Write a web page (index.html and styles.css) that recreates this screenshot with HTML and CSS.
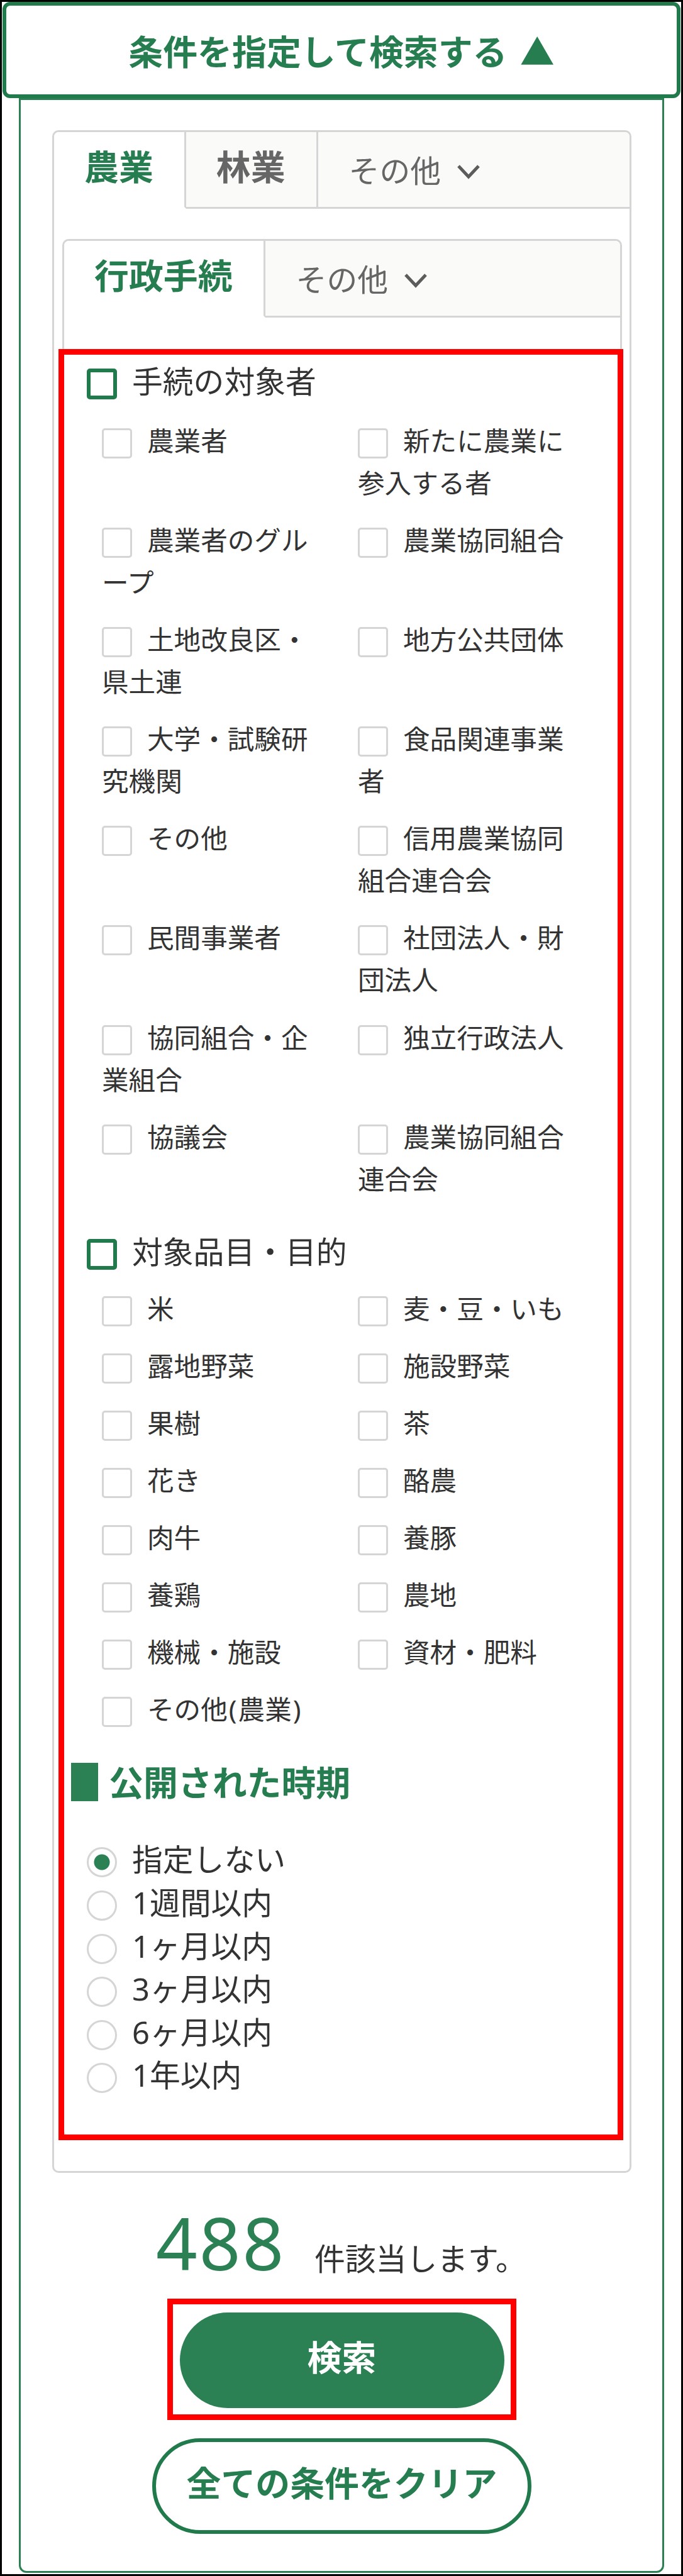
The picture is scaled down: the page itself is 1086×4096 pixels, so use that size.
FILE: index.html
```
<!DOCTYPE html>
<html lang="ja">
<head>
    <meta charset="UTF-8">
    <meta name="viewport" content="width=device-width, initial-scale=1.0">
    <title>条件を指定して検索する</title>
    <link rel="stylesheet" href="styles.css">
</head>
<body>
    <div class="page">
        <div class="search-toggle">条件を指定して検索する <span class="arrow">▲</span></div>

        <div class="search-panel">
            <div class="tab-box">
                <div class="tabs">
                    <div class="tab active">農業</div>
                    <div class="tab">林業</div>
                    <div class="tab-more">その他
                        <svg class="chevron" viewBox="0 0 38 24"><path d="M3 3 L19 20 L35 3"/></svg>
                    </div>
                </div>

                <div class="inner-box">
                    <div class="tabs">
                        <div class="tab active">行政手続</div>
                        <div class="tab-more">その他
                            <svg class="chevron" viewBox="0 0 38 24"><path d="M3 3 L19 20 L35 3"/></svg>
                        </div>
                    </div>

                    <div class="conditions">
                        <div class="group-title"><span class="check"></span>手続の対象者</div>
                        <div class="items">
                            <label class="item"><span class="check"></span>農業者</label>
                            <label class="item"><span class="check"></span>新たに農業に参入する者</label>
                            <label class="item"><span class="check"></span>農業者のグループ</label>
                            <label class="item"><span class="check"></span>農業協同組合</label>
                            <label class="item"><span class="check"></span>土地改良区・県土連</label>
                            <label class="item"><span class="check"></span>地方公共団体</label>
                            <label class="item"><span class="check"></span>大学・試験研究機関</label>
                            <label class="item"><span class="check"></span>食品関連事業者</label>
                            <label class="item"><span class="check"></span>その他</label>
                            <label class="item"><span class="check"></span>信用農業協同組合連合会</label>
                            <label class="item"><span class="check"></span>民間事業者</label>
                            <label class="item"><span class="check"></span>社団法人・財団法人</label>
                            <label class="item"><span class="check"></span>協同組合・企業組合</label>
                            <label class="item"><span class="check"></span>独立行政法人</label>
                            <label class="item"><span class="check"></span>協議会</label>
                            <label class="item"><span class="check"></span>農業協同組合連合会</label>
                        </div>

                        <div class="group-title second"><span class="check"></span>対象品目・目的</div>
                        <div class="items">
                            <label class="item"><span class="check"></span>米</label>
                            <label class="item"><span class="check"></span>麦・豆・いも</label>
                            <label class="item"><span class="check"></span>露地野菜</label>
                            <label class="item"><span class="check"></span>施設野菜</label>
                            <label class="item"><span class="check"></span>果樹</label>
                            <label class="item"><span class="check"></span>茶</label>
                            <label class="item"><span class="check"></span>花き</label>
                            <label class="item"><span class="check"></span>酪農</label>
                            <label class="item"><span class="check"></span>肉牛</label>
                            <label class="item"><span class="check"></span>養豚</label>
                            <label class="item"><span class="check"></span>養鶏</label>
                            <label class="item"><span class="check"></span>農地</label>
                            <label class="item"><span class="check"></span>機械・施設</label>
                            <label class="item"><span class="check"></span>資材・肥料</label>
                            <label class="item"><span class="check"></span>その他<span class="paren">(</span>農業<span class="paren">)</span></label>
                        </div>

                        <h2 class="period-title">公開された時期</h2>
                        <div class="radios">
                            <label class="radio-row"><span class="radio checked"></span>指定しない</label>
                            <label class="radio-row"><span class="radio"></span>1週間以内</label>
                            <label class="radio-row"><span class="radio"></span>1ヶ月以内</label>
                            <label class="radio-row"><span class="radio"></span>3ヶ月以内</label>
                            <label class="radio-row"><span class="radio"></span>6ヶ月以内</label>
                            <label class="radio-row"><span class="radio"></span>1年以内</label>
                        </div>
                    </div>
                    <div class="frame frame-conditions"></div>
                </div>
            </div>

            <div class="result">
                <span class="count">488</span>
                <span class="count-label">件該当します。</span>
            </div>

            <div class="buttons">
                <div class="btn btn-search">検索<div class="frame frame-search"></div></div>
                <div class="btn btn-clear">全ての条件をクリア</div>
            </div>
        </div>
    </div>
</body>
</html>
```
FILE: styles.css
```
* {
    box-sizing: border-box;
}

body {
    margin: 0;
    background-color: #fff;
    color: #333;
    font-family: "Noto Sans", "Noto Sans CJK JP", sans-serif;
    font-size: 48.8px;
}

.page {
    height: 4096px;
    border: 3px solid #000;
    padding-left: 1px;
    padding-right: 1px;
    overflow: hidden;
}

.search-toggle {
    height: 153px;
    border: 6px solid #217a4b;
    border-radius: 12px;
    color: #267d50;
    font-size: 54.9px;
    font-weight: bold;
    line-height: 145px;
    text-align: center;
}

.arrow {
    margin-left: 6px;
}

.search-panel {
    height: 3935px;
    margin: 0 26px;
    border: 3px solid #2b8054;
    border-radius: 0 0 12px 12px;
    padding: 48px 49px 0 50px;
}

/* タブ */
.tab-box {
    height: 3248px;
    border: 3px solid #d5d5d5;
    border-radius: 10px;
}

.tabs {
    display: flex;
    height: 122px;
}

.tab {
    padding: 0 49px 0 48px;
    border-right: 3px solid #d5d5d5;
    border-bottom: 3px solid #d5d5d5;
    background-color: #fafaf9;
    color: #666;
    font-size: 54.9px;
    font-weight: bold;
    line-height: 110px;
    white-space: nowrap;
}

.tab.active {
    border-bottom-color: #fff;
    border-radius: 8px 0 0 0;
    background-color: #fff;
    color: #267d50;
}

.tab-more {
    flex: 1;
    display: flex;
    align-items: center;
    padding: 0 0 2px 49px;
    border-bottom: 3px solid #d5d5d5;
    border-radius: 0 8px 0 0;
    background-color: #fafaf9;
    color: #666;
}

.chevron {
    width: 38px;
    height: 24px;
    margin-top: 8px;
    margin-left: 25px;
    fill: none;
    stroke: #5c5c5c;
    stroke-width: 5;
}

.inner-box {
    position: relative;
    height: 3018px;
    margin: 48px 12px 0 13px;
    border: 3px solid #d5d5d5;
    border-radius: 10px;
}

/* 検索条件 */
.conditions {
    padding-top: 68px;
}

.group-title {
    margin-bottom: 27px;
    padding-left: 36px;
    line-height: 67px;
}

.group-title.second {
    margin-top: 49px;
    margin-bottom: 23px;
}

.check {
    display: inline-block;
    width: 48px;
    height: 48px;
    margin-right: 24px;
    border: 3px solid #d5d5d5;
    border-radius: 5px;
    vertical-align: -12px;
}

.group-title .check {
    height: 49px;
    border: 6px solid #217a4b;
    vertical-align: -10px;
}

.items {
    display: grid;
    grid-template-columns: 407px 370px;
    row-gap: 24.1px;
    padding-left: 60px;
}

.item {
    padding-right: 45px;
    font-size: 42.6px;
    line-height: 67px;
    line-break: anywhere;
}

.item:nth-child(even) {
    padding-right: 20px;
}

.paren {
    margin: 0 2px;
}

.period-title {
    display: flex;
    align-items: center;
    margin: 52px 0 0 11px;
    color: #267d50;
    font-size: 54.9px;
    font-weight: bold;
    line-height: 61px;
}

.period-title::before {
    content: "";
    width: 43px;
    height: 61px;
    margin-right: 17px;
    background-color: #2b8054;
}

.radios {
    margin-top: 58px;
    padding-left: 36px;
}

.radio-row {
    display: block;
    line-height: 68.6px;
}

.radio {
    display: inline-block;
    width: 48px;
    height: 48px;
    margin-right: 24px;
    border: 3px solid #d5d5d5;
    border-radius: 50%;
    vertical-align: -10px;
}

.radio.checked {
    background: radial-gradient(circle, #2b8054 12px, #fff 13px);
}

/* 赤枠 */
.frame {
    position: absolute;
    border: 9px solid #f00;
}

.frame-conditions {
    top: 172px;
    left: -9px;
    width: 898px;
    height: 2848px;
}

.frame-search {
    top: -22px;
    left: -20px;
    width: 555px;
    height: 193px;
}

/* 件数とボタン */
.result {
    display: flex;
    align-items: baseline;
    height: 222px;
    padding: 31px 0 0 165px;
    line-height: 160px;
}

.count {
    width: 252px;
    color: #2b8054;
    font-size: 115px;
    letter-spacing: 3px;
}

.buttons {
    display: flex;
    flex-direction: column;
    align-items: center;
    gap: 48px;
}

.btn {
    position: relative;
    height: 152px;
    border-radius: 76px;
    font-size: 54.9px;
    font-weight: bold;
    line-height: 142px;
    text-align: center;
}

.btn-search {
    width: 516px;
    background-color: #2b8054;
    color: #fff;
}

.btn-clear {
    width: 603px;
    border: 6px solid #217a4b;
    color: #267d50;
    line-height: 130px;
}
```
